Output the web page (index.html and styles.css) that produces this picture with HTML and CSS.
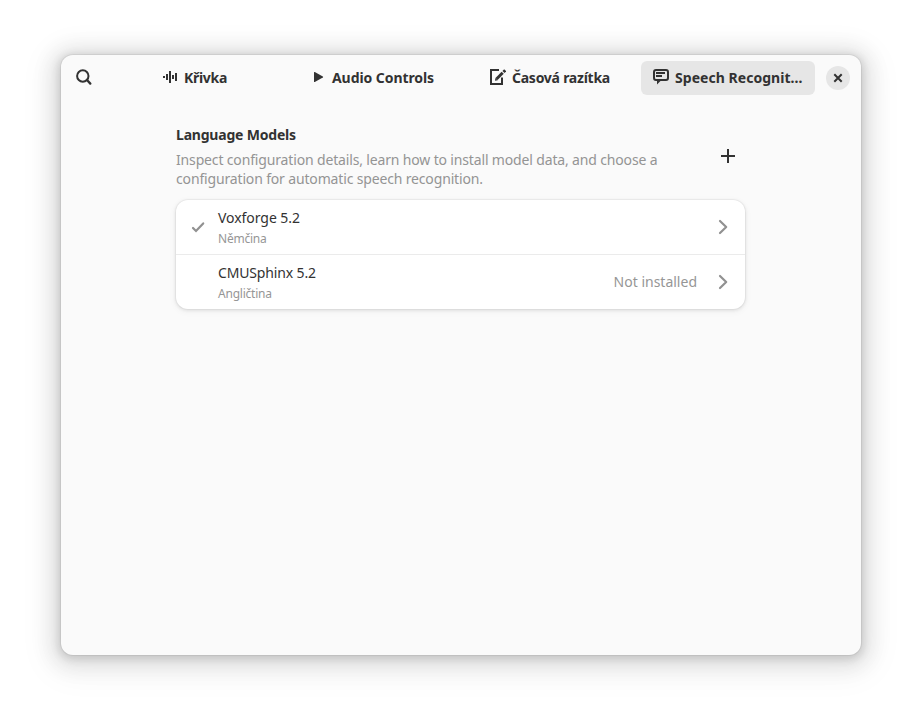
FILE: index.html
```html
<!DOCTYPE html>
<html lang="cs">
<head>
<meta charset="utf-8">
<title>Speech Recognition</title>
<link rel="stylesheet" href="styles.css">
</head>
<body>
<main class="window">
  <header class="headerbar">
    <button class="search" aria-label="Search"><svg width="16" height="16" viewBox="0 0 16 16" fill="none" stroke="currentColor" stroke-width="2"><circle cx="6.800" cy="7" r="5.700"/><path d="M11 11l3.300 3.600" stroke-width="2.300" stroke-linecap="round"/></svg></button>
    <nav class="tabs">
      <button class="tab tab-wave"><svg width="16" height="16" viewBox="0 0 16 16" fill="currentColor"><path d="M0 7h2v2H0zM3 5h2v6H3zM6 2h2v12H6zM9 6h2v4H9zM12 4h2v8h-2z"/></svg><span class="label krivka">Křivka</span></button>
      <button class="tab tab-audio"><svg width="16" height="16" viewBox="0 0 16 16" fill="currentColor"><path d="M2 3.500v9q0 .8.8.4l8-4.400q.8-.5 0-1l-8-4.400Q2 2.700 2 3.500z"/></svg><span class="label audio">Audio Controls</span></button>
      <button class="tab tab-stamps"><svg width="16" height="16" viewBox="0 0 16 16" fill="none" stroke="currentColor" stroke-width="2"><path d="M9 1H1v14h11V8.500"/><path d="M6.500 10l6.200-6.200" stroke-width="3"/><path d="M5 11.700l.4-2.800 2.400 2.400z" fill="currentColor" stroke="none"/><path d="M13.500 3l1.700-1.700" stroke-width="3"/></svg><span class="label razitka">Časová razítka</span></button>
      <button class="tab tab-speech active"><svg width="16" height="16" viewBox="0 0 16 16" fill="none" stroke="currentColor" stroke-width="2"><path d="M3 1h10q2 0 2 2v6q0 2-2 2H3q-2 0-2-2V3q0-2 2-2z"/><path d="M3 4h9M3 7h6"/><path d="M4 11h4.500L4 15.500z" fill="currentColor" stroke="none"/></svg><span class="label speech">Speech Recognit…</span></button>
    </nav>
    <button class="close" aria-label="Close"><svg width="10" height="10" viewBox="0 0 10 10" stroke="currentColor" stroke-width="2"><path d="M1.300 1.300l7.400 7.400M8.700 1.300L1.300 8.700"/></svg></button>
  </header>
  <section class="content">
    <div class="group-head">
      <div class="group-text">
        <h1>Language Models</h1>
        <p>Inspect configuration details, learn how to install model data, and choose a<br>configuration for automatic speech recognition.</p>
      </div>
      <button class="add" aria-label="Add"><svg width="14" height="14" viewBox="0 0 14 14" stroke="currentColor" stroke-width="2"><path d="M7 0v14M0 7h14"/></svg></button>
    </div>
    <div class="list">
      <div class="row">
        <svg class="check" width="16" height="16" viewBox="0 0 16 16" fill="none" stroke="currentColor" stroke-width="2.200"><path d="M3 9l3 3 7.200-7.600" stroke-linecap="round"/></svg>
        <div class="names"><div class="name vox">Voxforge 5.2</div><div class="lang">Němčina</div></div>
        <svg class="go" width="16" height="16" viewBox="0 0 16 16" fill="none" stroke="currentColor" stroke-width="2.200"><path d="M5 2l6.200 6L5 14" stroke-linecap="round" stroke-linejoin="round"/></svg>
      </div>
      <div class="row">
        <span class="check"></span>
        <div class="names"><div class="name cmu">CMUSphinx 5.2</div><div class="lang">Angličtina</div></div>
        <span class="status">Not installed</span>
        <svg class="go" width="16" height="16" viewBox="0 0 16 16" fill="none" stroke="currentColor" stroke-width="2.200"><path d="M5 2l6.200 6L5 14" stroke-linecap="round" stroke-linejoin="round"/></svg>
      </div>
    </div>
  </section>
</main>
</body>
</html>
```
FILE: styles.css
```css
* { box-sizing: border-box; }
body { margin: 0; padding: 55px 61px; height: 722px; overflow: hidden; background: #fff; color: #323232; font: 14px/19px "Noto Sans", sans-serif; }
button { border: 0; padding: 0; margin: 0; background: none; color: inherit; font: inherit; display: flex; align-items: center; justify-content: center; }
svg { display: block; flex: none; }
.window { width: 800px; height: 600px; border-radius: 12px; background: #fafafa; box-shadow: 0 2px 8px 2px rgba(0,0,0,.13), 0 3px 20px 10px rgba(0,0,0,.09), 0 6px 32px 16px rgba(0,0,0,.04), 0 0 0 1px rgba(0,0,0,.05); }
.headerbar { height: 46px; display: flex; align-items: center; padding: 0 11px 0 6px; }
.search { width: 34px; height: 34px; padding-bottom: 2px; }
.tabs { display: grid; grid-template-columns: 175px 174px 175px 174px; gap: 3px; margin-left: 7px; }
.tab { height: 34px; gap: 5px; border-radius: 6px; font-weight: 700; justify-content: flex-start; padding-bottom: 2px; }
.tab-wave { padding-left: 55px; }
.tab-audio { padding-left: 26px; gap: 4px; }
.tab-stamps { padding-left: 27px; gap: 6px; }
.tab-speech { padding-left: 12px; gap: 6px; }
.tab.active { background: #e6e6e6; }
.label { white-space: nowrap; }
.krivka { letter-spacing: -.3px; }
.audio { letter-spacing: -.07px; }
.razitka { letter-spacing: -.25px; }
.speech { letter-spacing: .04px; }
.close { width: 24px; height: 24px; margin-left: auto; border-radius: 50%; background: #e6e6e6; }
.content { width: 569px; margin: 24px 0 0 115px; }
.group-head { display: flex; height: 75px; }
.group-text { flex: 1; white-space: nowrap; }
h1 { font-size: 14px; line-height: 19px; margin: 0 0 6px; letter-spacing: -.2px; }
p { margin: 0; color: #949494; letter-spacing: -.155px; }
.add { width: 34px; height: 34px; margin-top: 14px; }
.list { background: #fff; border-radius: 12px; box-shadow: 0 0 0 1px rgba(0,0,0,.03), 0 1px 3px 1px rgba(0,0,0,.07), 0 2px 6px 2px rgba(0,0,0,.03); }
.row { height: 54px; display: flex; align-items: center; padding: 0 14px; }
.row + .row { height: 55px; border-top: 1px solid #ebebeb; }
.check { width: 16px; margin-right: 12px; color: #919191; }
.names { flex: 1; white-space: nowrap; }
.name { line-height: 19px; margin-bottom: 4px; }
.vox { letter-spacing: -.05px; }
.cmu { letter-spacing: -.15px; }
.lang { font-size: 12px; line-height: 16px; color: #969696; letter-spacing: -.22px; }
.status { color: #969696; margin-right: 18px; padding-bottom: 2px; white-space: nowrap; }
.go { color: #919191; }
```
